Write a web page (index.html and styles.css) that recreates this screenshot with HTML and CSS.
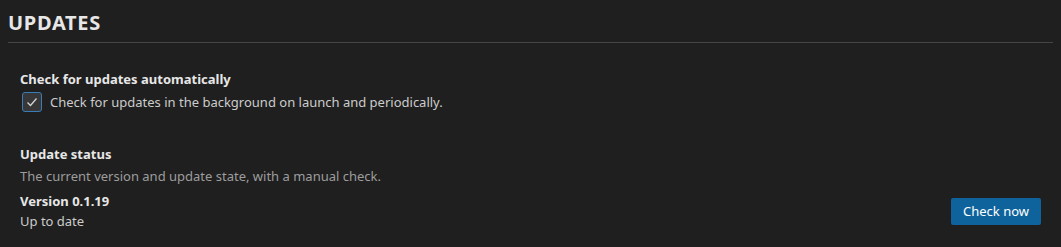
FILE: index.html
```html
<!DOCTYPE html>
<html lang="en">
<head>
    <meta charset="UTF-8">
    <title>Updates</title>
    <link rel="stylesheet" href="styles.css">
</head>
<body>
    <div class="settings">
        <h2 class="section-title">UPDATES</h2>

        <div class="setting">
            <div class="setting-title">Check for updates automatically</div>
            <label class="checkbox-row">
                <span class="checkbox checked">
                    <svg width="14" height="14" viewBox="0 0 14 14">
                        <path d="M2.5 7.5 L5.5 10.5 L11.5 3.5" fill="none" stroke="#d4d4d4" stroke-width="1.3"/>
                    </svg>
                </span>
                <span class="checkbox-label">Check for updates in the background on launch and periodically.</span>
            </label>
        </div>

        <div class="setting status">
            <div class="setting-title">Update status</div>
            <div class="setting-desc">The current version and update state, with a manual check.</div>
            <div class="status-row">
                <div class="status-info">
                    <div class="version">Version 0.1.19</div>
                    <div class="state">Up to date</div>
                </div>
                <button class="btn-primary">Check now</button>
            </div>
        </div>
    </div>
</body>
</html>
```

FILE: styles.css
```css
body {
    margin: 0;
    background: #1f1f1f;
    color: #cccccc;
    font-family: "Noto Sans", "Open Sans", sans-serif;
    font-size: 13px;
}

.settings {
    padding: 0 8px;
}

.section-title {
    margin: 0;
    padding: 10px 0 6px 0;
    font-size: 20px;
    font-weight: 700;
    letter-spacing: 0.7px;
    color: #e7e7e7;
    border-bottom: 1px solid #454545;
    line-height: 26px;
}

.setting {
    padding: 0 12px;
}

.setting-title {
    font-weight: 700;
    color: #e7e7e7;
    line-height: 18px;
}

.setting:first-of-type {
    margin-top: 27px;
}

.checkbox-row {
    display: flex;
    align-items: center;
    gap: 8px;
    margin-top: 4px;
    cursor: pointer;
}

.checkbox {
    width: 18px;
    height: 18px;
    margin-left: 2px;
    border: 1px solid #3a7cb8;
    border-radius: 3px;
    background: #373737;
    display: flex;
    align-items: center;
    justify-content: center;
}

.checkbox-label {
    line-height: 20px;
}

.status {
    margin-top: 33px;
}

.setting-desc {
    color: #9d9d9d;
    margin-top: 4px;
    line-height: 18px;
}

.status-row {
    display: flex;
    align-items: center;
    justify-content: space-between;
    margin-top: 7px;
}

.version {
    font-weight: 700;
    color: #e7e7e7;
    line-height: 18px;
}

.state {
    margin-top: 2px;
    line-height: 18px;
}

.btn-primary {
    font-family: inherit;
    font-size: 13px;
    background: #0e639c;
    color: #ffffff;
    border: none;
    border-radius: 2px;
    width: 90px;
    height: 27px;
    cursor: pointer;
}
```
